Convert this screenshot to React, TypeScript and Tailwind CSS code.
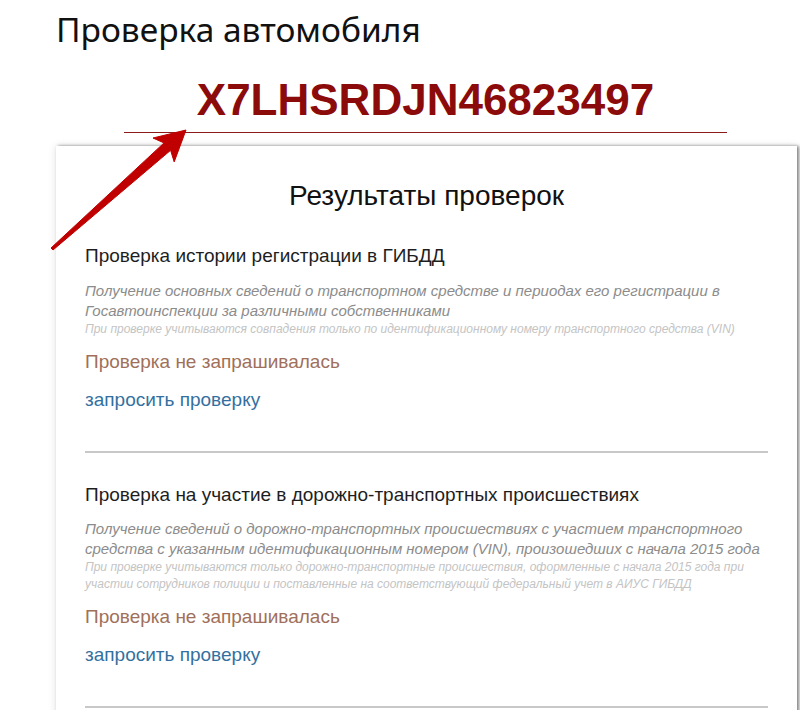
import React from "react";

function Arrow() {
  return (
    <svg
      className="absolute left-0 top-0 pointer-events-none"
      width="800"
      height="710"
      viewBox="0 0 800 710"
    >
      <path
        d="M51 248 L164 142.9 L153 138 L186 130 L174.2 161.9 L170.6 150.3 L53 250 Z"
        fill="#c00000"
        stroke="#c00000"
        strokeWidth="1"
        strokeLinejoin="round"
      />
    </svg>
  );
}

function Section({
  title,
  desc,
  note,
  descMt,
}: {
  title: string;
  desc: string;
  note: string;
  descMt: string;
}) {
  return (
    <div>
      <div className="text-[19px] leading-[24px] text-[#1e1e1e]">{title}</div>
      <div className={`${descMt} text-[15px] leading-[20px] italic text-[#8c8c8c]`}>
        {desc}
      </div>
      <div className="text-[12px] leading-[17px] italic text-[#c4c4c4]">{note}</div>
      <div className="mt-[12px] text-[19px] leading-[24px] text-[#a0705a]">
        Проверка не запрашивалась
      </div>
      <div className="mt-[14px] text-[19px] leading-[24px] text-[#34709f]">
        запросить проверку
      </div>
      <div className="mt-[39px] h-[2px] bg-[#c8c8c8]" />
    </div>
  );
}

export default function App() {
  return (
    <div
      className="relative w-[800px] h-[710px] overflow-hidden bg-white"
      style={{ fontFamily: '"Liberation Sans", Arial, sans-serif' }}
    >
      <div
        className="pl-[56px] pt-[9px] text-[33.5px] leading-[40px] text-[#111]"
        style={{ fontFamily: '"Noto Sans", "Open Sans", sans-serif' }}
      >
        Проверка автомобиля
      </div>
      <div className="ml-[124px] mt-[25px] w-[603px] border-b border-[#8b1a1a] pb-[6px] text-center text-[44px] font-bold leading-[52px] text-[#8b0a0a]">
        X7LHSRDJN46823497
      </div>
      <div className="ml-[56px] mt-[13px] w-[741px] bg-white px-[29px] pt-[32px] shadow-[2px_0_3px_rgba(0,0,0,0.45),0_0_8px_rgba(0,0,0,0.12)]">
        <div className="text-center text-[28px] leading-[36px] text-[#111]">
          Результаты проверок
        </div>
        <div className="mt-[30px]">
          <Section
            descMt="mt-[13px]"
            title="Проверка истории регистрации в ГИБДД"
            desc="Получение основных сведений о транспортном средстве и периодах его регистрации в Госавтоинспекции за различными собственниками"
            note="При проверке учитываются совпадения только по идентификационному номеру транспортного средства (VIN)"
          />
        </div>
        <div className="mt-[30px]">
          <Section
            descMt="mt-[12px]"
            title="Проверка на участие в дорожно-транспортных происшествиях"
            desc="Получение сведений о дорожно-транспортных происшествиях с участием транспортного средства с указанным идентификационным номером (VIN), произошедших с начала 2015 года"
            note="При проверке учитываются только дорожно-транспортные происшествия, оформленные с начала 2015 года при участии сотрудников полиции и поставленные на соответствующий федеральный учет в АИУС ГИБДД"
          />
        </div>
        <div className="h-[40px]" />
      </div>
      <Arrow />
    </div>
  );
}
